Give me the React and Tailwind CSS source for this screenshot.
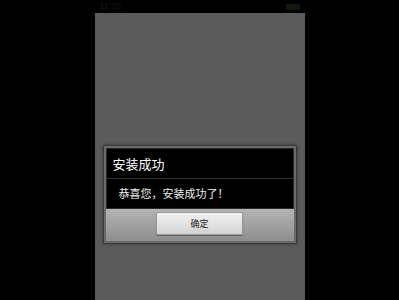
import React from "react";

const StatusBar = () => (
  <div className="h-[13px] flex items-center justify-between px-[5px] bg-black">
    <span className="text-[9px] leading-none text-[#141414] font-['Liberation_Sans',sans-serif]">11:35</span>
    <div className="w-[14px] h-[6px] rounded-[1px] bg-[#121a0c]" />
  </div>
);

const InstallDialog = () => (
  <div className="border border-[#3a3a3a] bg-[#6a6a6a] p-[2px] shadow-[0_0_2px_rgba(0,0,0,0.5)]">
    <div className="bg-black border border-[#2a2a2a]">
      <div className="h-[29px] flex items-center pl-[6px] text-[13px] text-white">安装成功</div>
      <div className="h-px bg-[#2e2e2e]" />
      <div className="h-[29px] flex items-center pl-[12px] text-[11px] text-[#f0f0f0]">
        恭喜您，安装成功了！
      </div>
    </div>
    <div className="h-[32px] flex justify-center pt-[3px] bg-gradient-to-b from-[#b4b4b4] to-[#8e8e8e]">
      <button className="w-[87px] h-[23px] rounded-[2px] border border-[#9a9a9a] bg-gradient-to-b from-[#f2f2f2] to-[#d2d2d2] text-[9px] text-[#222] shadow-[0_1px_1px_rgba(0,0,0,0.35)]">
        确定
      </button>
    </div>
  </div>
);

export default function App() {
  return (
    <div
      className="w-[399px] h-[300px] bg-black flex justify-center overflow-hidden"
      style={{ fontFamily: "'Noto Sans CJK SC', 'Noto Sans', sans-serif" }}
    >
      <div className="w-[210px] flex flex-col">
        <StatusBar />
        <div className="flex-1 bg-[#5b5b5b] px-[8px] pt-[132px]">
          <InstallDialog />
        </div>
      </div>
    </div>
  );
}
